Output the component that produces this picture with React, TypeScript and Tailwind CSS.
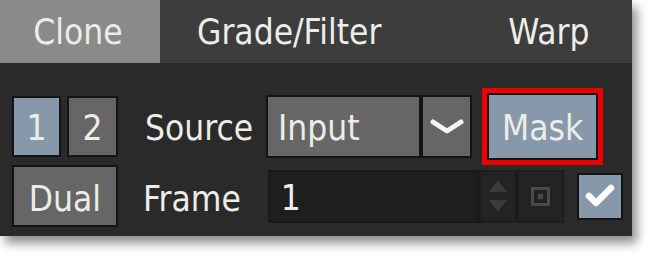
import React from "react";

const font = { fontFamily: '"DejaVu Sans Condensed", "DejaVu Sans", sans-serif' };

export default function App() {
  return (
    <div className="w-[652px] h-[257px] bg-white overflow-hidden" style={font}>
      <div className="w-[632px] h-[236px] bg-[#2a2a2a] shadow-[5px_7px_10px_rgba(0,0,0,0.45)] flex flex-col text-[35px] text-[#edede8]">
        {/* Tabs */}
        <div className="h-[63px] bg-[#3d3d3d] flex items-center shrink-0">
          <div className="w-[160px] h-full bg-[#8a8a8a] flex items-center justify-center pt-[2px] pr-[4px] leading-none">
            Clone
          </div>
          <div className="pl-[37px] pt-[2px] leading-none">Grade/Filter</div>
          <div className="ml-[127px] pt-[2px] leading-none">Warp</div>
        </div>

        {/* Row 1 */}
        <div className="flex items-center h-[63px] mt-[32px] pl-[12px]">
          <div className="w-[49px] h-[61px] bg-[#8698a9] border-2 border-[#141414] flex items-center justify-center leading-none pt-[3px]">
            1
          </div>
          <div className="w-[51px] h-[61px] ml-[6px] bg-[#666666] border-2 border-[#141414] flex items-center justify-center leading-none pt-[3px]">
            2
          </div>
          <div className="ml-[27px] leading-none pt-[3px]">Source</div>
          <div className="ml-[13px] w-[155px] h-[63px] bg-[#666666] border-2 border-[#141414] flex items-center pl-[10px] leading-none pt-[3px]">
            Input
          </div>
          <div className="w-[51px] h-[63px] bg-[#666666] border-2 border-[#141414] flex items-center justify-center">
            <svg width="36" height="18" viewBox="0 0 36 18">
              <path d="M4 4 L18 13 L32 4" fill="none" stroke="#f4f4f4" strokeWidth="5" strokeLinecap="round" strokeLinejoin="round" />
            </svg>
          </div>
          <div className="ml-[10px] w-[121px] h-[77px] border-[5px] border-[#ee0000] bg-[#141414] p-[2px] flex">
            <div className="flex-1 bg-[#8698a9] flex items-center justify-center leading-none pt-[3px]">
              Mask
            </div>
          </div>
        </div>

        {/* Row 2 */}
        <div className="flex items-center h-[63px] mt-[6px] pl-[12px]">
          <div className="w-[106px] h-[62px] bg-[#666666] border-2 border-[#141414] flex items-center justify-center leading-none pt-[7px]">
            Dual
          </div>
          <div className="ml-[25px] leading-none pt-[7px]">Frame</div>
          <div className="ml-[27px] flex h-[53px] mt-[1px]">
            <div className="w-[211px] h-full bg-[#1e1e1e] border-2 border-[#191919] flex items-center pl-[11px] leading-none pt-[5px]">
              1
            </div>
            <div className="w-[38px] h-full bg-[#232323] border-2 border-[#1c1c1c] flex flex-col items-center justify-center gap-[8px]">
              <svg width="18" height="12" viewBox="0 0 18 12">
                <path d="M9 0 L18 12 L0 12 Z" fill="#3b3b3b" />
              </svg>
              <svg width="18" height="12" viewBox="0 0 18 12">
                <path d="M0 0 L18 0 L9 12 Z" fill="#3b3b3b" />
              </svg>
            </div>
            <div className="w-[47px] h-full bg-[#232323] border-2 border-[#1c1c1c] flex items-center justify-center">
              <div className="w-[19px] h-[19px] border-[3px] border-[#4a4a4a] flex items-center justify-center">
                <div className="w-[5px] h-[5px] bg-[#4a4a4a]" />
              </div>
            </div>
          </div>
          <div className="ml-[13px] w-[46px] h-[47px] bg-[#8698a9] border-2 border-[#141414] flex items-center justify-center mt-[1px]">
            <svg width="32" height="26" viewBox="0 0 32 26">
              <path d="M5 13 L12 20 L27 5" fill="none" stroke="#ffffff" strokeWidth="6.5" strokeLinecap="round" strokeLinejoin="round" />
            </svg>
          </div>
        </div>
      </div>
    </div>
  );
}
